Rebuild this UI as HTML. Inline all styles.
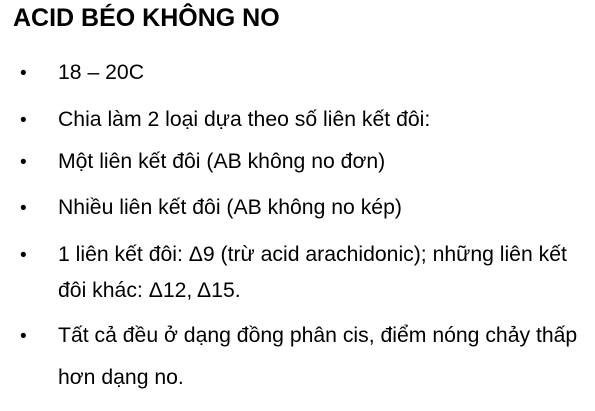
<!DOCTYPE html>
<html><head><meta charset="utf-8"><style>
body{margin:0;width:595px;height:411px;background:#fff;font-family:"Liberation Sans",Arial,sans-serif;color:#000;position:relative;overflow:hidden}
.t{position:absolute;left:13px;top:4px;font-size:25px;font-weight:bold;line-height:28px}
.l{position:absolute;left:58px;font-size:21.2px;line-height:22px;white-space:nowrap}
.b{position:absolute;left:20px;font-size:19px;line-height:22px}
</style></head><body>
<div class="t">ACID BÉO KHÔNG NO</div>
<div class="b" style="top:63px">•</div><div class="l" style="top:62px">18 – 20C</div>
<div class="b" style="top:110px">•</div><div class="l" style="top:109px">Chia làm 2 loại dựa theo số liên kết đôi:</div>
<div class="b" style="top:152px">•</div><div class="l" style="top:151px">Một liên kết đôi (AB không no đơn)</div>
<div class="b" style="top:198px">•</div><div class="l" style="top:197px">Nhiều liên kết đôi (AB không no kép)</div>
<div class="b" style="top:245px">•</div><div class="l" style="top:244px">1 liên kết đôi: Δ9 (trừ acid arachidonic); những liên kết</div>
<div class="l" style="top:280px">đôi khác: Δ12, Δ15.</div>
<div class="b" style="top:326px">•</div><div class="l" style="top:325px">Tất cả đều ở dạng đồng phân cis, điểm nóng chảy thấp</div>
<div class="l" style="top:367px">hơn dạng no.</div>
</body></html>
